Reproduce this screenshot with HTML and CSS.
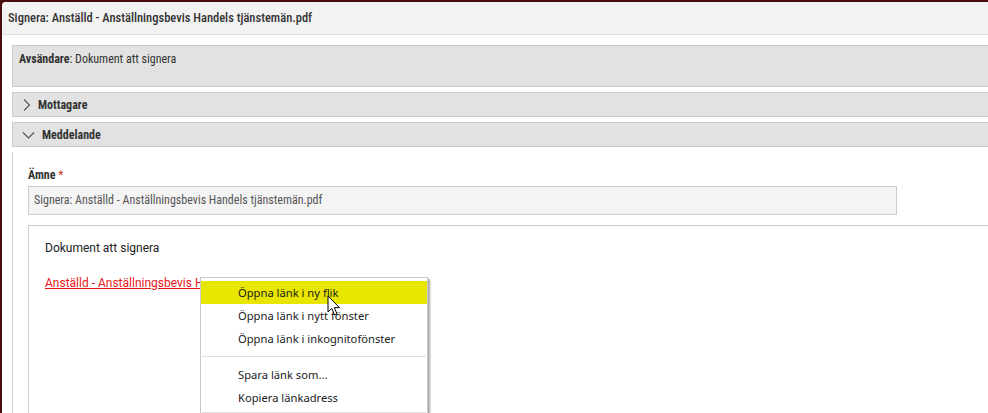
FILE: index.html
```
<!DOCTYPE html>
<html lang="sv">
<head>
<meta charset="utf-8">
<title>Signera</title>
<link rel="stylesheet" href="styles.css">
</head>
<body>
<div class="dialog">
  <div class="dlg-header">Signera: Anställd - Anställningsbevis Handels tjänstemän.pdf</div>
  <div class="dlg-body">
    <div class="panel sender"><b>Avsändare</b>: Dokument att signera</div>
    <div class="panel section-head">
      <svg class="chev" width="14" height="14" viewBox="0 0 14 14"><path d="M4 1.5 L9.5 7 L4 12.5" fill="none" stroke="#555" stroke-width="1.1"/></svg>
      <span>Mottagare</span>
    </div>
    <div class="panel section-head">
      <svg class="chev" width="18" height="14" viewBox="0 0 18 14"><path d="M3 4.5 L8.5 10 L14 4.5" fill="none" stroke="#555" stroke-width="1.1"/></svg>
      <span>Meddelande</span>
    </div>
    <div class="section-body">
      <label class="field-label">Ämne <span class="req">*</span></label>
      <div class="input">Signera: Anställd - Anställningsbevis Handels tjänstemän.pdf</div>
      <div class="editor">
        <p class="doc-title">Dokument att signera</p>
        <p class="doc-link"><a href="#">Anställd - Anställningsbevis Handels tjänstemän.pdf</a></p>
      </div>
    </div>
  </div>
  <ul class="ctx-menu">
    <li class="item active">Öppna länk i ny flik</li>
    <li class="item">Öppna länk i nytt fönster</li>
    <li class="item">Öppna länk i inkognitofönster</li>
    <li class="sep"></li>
    <li class="item">Spara länk som...</li>
    <li class="item">Kopiera länkadress</li>
    <li class="sep"></li>
  </ul>
  <svg class="cursor" width="14" height="22" viewBox="0 0 14 22"><path d="M1 1 L1 17 L4.8 13.4 L7.6 20 L10 19 L7.3 12.6 L12.4 12.6 Z" fill="#fff" stroke="#000" stroke-width="1" stroke-linejoin="round"/></svg>
</div>
</body>
</html>
```
FILE: styles.css
```
html, body {
  margin: 0;
  padding: 0;
  height: 100%;
}
body {
  background: #4a0c10;
  overflow: hidden;
}
.dialog {
  position: relative;
  margin: 2px 0 0 2px;
  height: calc(100% - 2px);
  background: #fff;
  border-top-left-radius: 4px;
  overflow: hidden;
  font-family: Roboto, "Liberation Sans", sans-serif;
  font-stretch: 80%;
  color: #333;
}
.dlg-header {
  height: 32px;
  line-height: 31px;
  padding-left: 6px;
  background: #f2f2f2;
  border-bottom: 1px solid #e0e0e0;
  font-size: 12.5px;
  font-weight: 500;
  color: #333;
}
.dlg-body {
  padding: 10px 0 0 10px;
}
.panel {
  background: #e2e2e2;
  border: 1px solid #cccccc;
  margin-right: -10px;
  font-size: 12px;
}
.sender {
  box-sizing: border-box;
  height: 42px;
  padding: 6px 6px;
  line-height: 14px;
  margin-bottom: 5px;
}
.sender b {
  font-weight: 700;
}
.section-head {
  height: 25px;
  box-sizing: border-box;
  display: flex;
  align-items: center;
  gap: 4px;
  padding-left: 7px;
  font-weight: 700;
  margin-bottom: 5px;
}
.section-head:last-of-type {
  margin-bottom: 0;
}
.chev {
  flex: none;
}
.section-body {
  border-left: 1px solid #cccccc;
  padding: 16px 0 0 15px;
  height: 300px;
}
.field-label {
  display: block;
  font-size: 12px;
  font-weight: 700;
  line-height: 14px;
  color: #333;
  margin-bottom: 4px;
}
.req {
  color: #c0392b;
  font-weight: 400;
}
.input {
  height: 27px;
  line-height: 27px;
  padding-left: 5px;
  width: 862px;
  background: #f4f4f4;
  border: 1px solid #cccccc;
  font-size: 12px;
  color: #555;
}
.editor {
  margin-top: 10px;
  border-top: 1px solid #cccccc;
  border-left: 1px solid #cccccc;
  padding: 15px 0 0 16px;
  height: 250px;
  font-stretch: 100%;
  font-size: 12px;
  color: #222;
}
.editor p {
  margin: 0;
  line-height: 14px;
}
.doc-link {
  margin-top: 21px !important;
}
.doc-link a {
  color: #e8151b;
  text-decoration: underline;
}
.ctx-menu {
  position: absolute;
  left: 198px;
  top: 275px;
  width: 226px;
  margin: 0;
  padding: 3px 0 0 0;
  list-style: none;
  background: #fff;
  border: 1px solid #c9c9c9;
  box-shadow: 2px 2px 2px rgba(0, 0, 0, 0.35);
  font-family: "Noto Sans", "Open Sans", sans-serif;
  font-stretch: 100%;
  font-size: 11.2px;
  color: #1a1a1a;
  height: 200px;
}
.item {
  height: 23px;
  line-height: 23px;
  padding-left: 37px;
}
.item.active {
  background: #e8e600;
}
.sep {
  height: 1px;
  background: #e0e0e0;
  margin: 6px 1px;
}
.sep:last-child {
  margin-top: 3px;
}
.cursor {
  position: absolute;
  left: 325px;
  top: 293px;
}
```
